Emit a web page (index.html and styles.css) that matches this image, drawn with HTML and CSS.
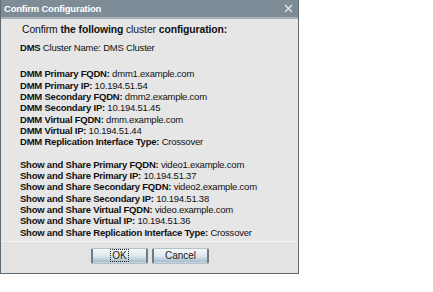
FILE: index.html
```html
<!DOCTYPE html>
<html lang="en">
  <head>
    <meta charset="UTF-8" />
    <title>Confirm Configuration</title>
    <link rel="stylesheet" href="styles.css">
  </head>
  <body>
    <div class="dialog">
      <div class="titlebar">
        <span class="title">Confirm Configuration</span>
        <svg class="close" width="9" height="9" viewBox="0 0 9 9">
          <path d="M1 1 L8 8 M8 1 L1 8" stroke="#e8ecef" stroke-width="1.2" fill="none" />
        </svg>
      </div>

      <div class="content">
        <p class="intro">Confirm <b>the following</b> cluster <b>configuration:</b></p>

        <p class="row single"><b>DMS</b> Cluster Name: DMS Cluster</p>

        <div class="group">
          <p class="row"><b>DMM Primary FQDN:</b> dmm1.example.com</p>
          <p class="row"><b>DMM Primary IP:</b> 10.194.51.54</p>
          <p class="row"><b>DMM Secondary FQDN:</b> dmm2.example.com</p>
          <p class="row"><b>DMM Secondary IP:</b> 10.194.51.45</p>
          <p class="row"><b>DMM Virtual FQDN:</b> dmm.example.com</p>
          <p class="row"><b>DMM Virtual IP:</b> 10.194.51.44</p>
          <p class="row"><b>DMM Replication Interface Type:</b> Crossover</p>
        </div>

        <div class="group">
          <p class="row"><b>Show and Share Primary FQDN:</b> video1.example.com</p>
          <p class="row"><b>Show and Share Primary IP:</b> 10.194.51.37</p>
          <p class="row"><b>Show and Share Secondary FQDN:</b> video2.example.com</p>
          <p class="row"><b>Show and Share Secondary IP:</b> 10.194.51.38</p>
          <p class="row"><b>Show and Share Virtual FQDN:</b> video.example.com</p>
          <p class="row"><b>Show and Share Virtual IP:</b> 10.194.51.36</p>
          <p class="row"><b>Show and Share Replication Interface Type:</b> Crossover</p>
        </div>
      </div>

      <div class="footer">
        <button class="button focused"><span>OK</span></button>
        <button class="button"><span>Cancel</span></button>
      </div>
    </div>
  </body>
</html>
```

FILE: styles.css
```css
body {
  font-family: "Liberation Sans", Arial, sans-serif;
  margin: 0;
  padding: 0;
  background-color: white;
}

p {
  margin: 0;
}

.dialog {
  width: 297px;
  border: 1px solid #5f6b74;
  border-top: none;
  background-color: #e6e6e6;
}

.titlebar {
  display: flex;
  justify-content: space-between;
  align-items: center;
  height: 17px;
  padding: 0 5px 0 3px;
  background-color: #7d8c96;
  border-bottom: 2px solid #a9b2b8;
}

.title {
  color: white;
  font-size: 9.5px;
  font-weight: 700;
  letter-spacing: -0.2px;
}

.close {
  display: block;
}

.content {
  padding: 4px 0 0 19px;
  font-size: 9.5px;
  letter-spacing: -0.22px;
  color: #111;
}

.intro {
  font-size: 10.4px;
  letter-spacing: -0.1px;
  line-height: 14px;
  padding-left: 2px;
}

.single {
  margin-top: 5px;
}

.row {
  line-height: 11.33px;
  white-space: nowrap;
}

.group {
  margin-top: 15px;
}

.group + .group {
  margin-top: 11px;
}

.footer {
  display: flex;
  justify-content: center;
  gap: 4px;
  margin-top: 3px;
  padding: 6px 0 9px 1px;
  border-top: 1px solid #f0f0f0;
  background-color: #e3e3e3;
}

.button {
  width: 57px;
  height: 16px;
  padding: 0;
  font-family: "Liberation Sans", Arial, sans-serif;
  font-size: 10px;
  color: #222;
  border: 1px solid #b4c0c8;
  border-left: 2px solid #6f7c86;
  border-right: 2px solid #6f7c86;
  border-radius: 2px;
  background: linear-gradient(#f6f8f9, #dde7ee 50%, #a9bfcf 90%, #d8e2e8);
}

.focused span {
  outline: 1px dotted #222;
  padding: 0 1px;
}
```
